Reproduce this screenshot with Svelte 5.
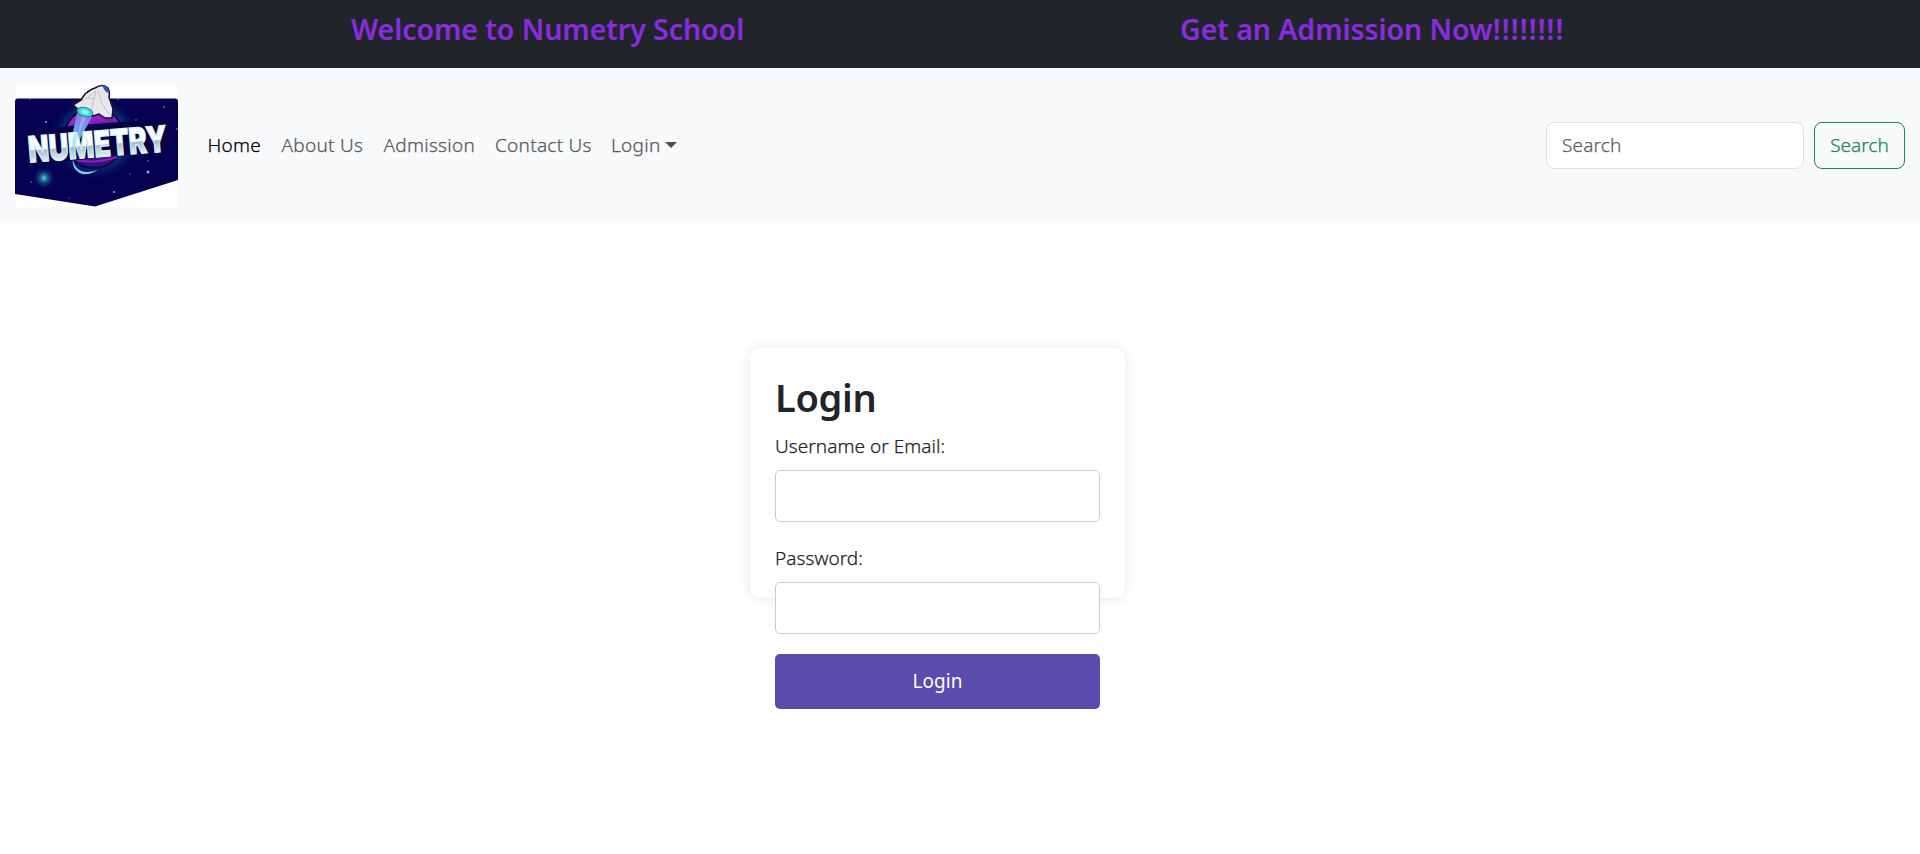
<script>
  const links = [
    { label: 'Home', cls: 'home' },
    { label: 'About Us', cls: 'about' },
    { label: 'Admission', cls: 'admission' },
    { label: 'Contact Us', cls: 'contact' },
    { label: 'Login', cls: 'login' }
  ];
  const stars = [[31, 38, 1], [15, 15, .7], [103, 15, .8], [133, 88, 1.5], [99, 108, 1], [16, 98, .7], [54, 114, .6], [149, 23, .8], [162, 45, .8], [115, 90, .6], [133, 77, .7], [121, 36, .7]];
</script>

<header class="banner">
  <h4>Welcome to Numetry School</h4>
  <h4>Get an Admission Now<span class="marks">!!!!!!!!</span></h4>
</header>

<nav class="navbar">
  <svg class="logo" viewBox="0 0 163 123" width="163" height="123">
    <defs>
      <radialGradient id="sky"><stop offset="0" stop-color="#0875aa" /><stop offset=".65" stop-color="#063c83" /><stop offset="1" stop-color="#050052" stop-opacity="0" /></radialGradient>
      <radialGradient id="glow"><stop offset="0" stop-color="#6cc9dd" /><stop offset=".25" stop-color="#1e7299" /><stop offset="1" stop-color="#050052" stop-opacity="0" /></radialGradient>
      <linearGradient id="planet" x1="0" y1="0" x2=".3" y2="1"><stop offset="0" stop-color="#bd35df" /><stop offset=".4" stop-color="#7f1abc" /><stop offset="1" stop-color="#35107f" /></linearGradient>
      <linearGradient id="steel" gradientUnits="userSpaceOnUse" x1="0" y1="46" x2="0" y2="73"><stop offset="0" stop-color="#fff" /><stop offset=".54" stop-color="#f4f9fc" /><stop offset=".58" stop-color="#a9b9c9" /><stop offset="1" stop-color="#e4f2f6" /></linearGradient>
      <linearGradient id="beam" x1="0" y1="0" x2="0" y2="1"><stop offset="0" stop-color="#8c72e8" /><stop offset="1" stop-color="#50dce9" /></linearGradient>
    </defs>
    <path d="M0 0H163V123H0z" fill="#fdfdfe" />
    <path d="M3 14.500H160Q163 14.500 163 17.500V96L80 122.500L0 110V17.500Q0 14.500 3 14.500z" fill="#050052" />
    <ellipse cx="80" cy="54" rx="47" ry="43" fill="url(#sky)" />
    <circle cx="29" cy="94" r="12" fill="url(#glow)" />
    {#each stars as [x, y, r]}<circle cx={x} cy={y} {r} fill="#83a7d2" />{/each}
    <circle cx="79" cy="54" r="30" fill="url(#planet)" stroke="#09083c" stroke-width="2" />
    <path d="M90 29Q98 31 102 38M62 76Q80 80 102 73" fill="none" stroke="#8a20c0" stroke-width="2" />
    <path d="M10 50L54 42L104 38L155 35L152 68L99 72L62 76L13 83z" fill="#070044" />
    <path d="M62 29L77 33L67 51L59 67L57 52z" fill="url(#beam)" />
    <path d="M67 31L72 32L62 55z" fill="#b8b4fa" opacity=".6" />
    <g transform="rotate(-4.700 82 61)">
      <text x="13" y="73" textLength="139" lengthAdjust="spacingAndGlyphs" class="wordmark">NUMETRY</text>
    </g>
    <path d="M58 51L64 48L60 62L59 78Q56 64 58 51z" fill="#62d9ee" opacity=".45" />
    <path d="M58 76Q62 93 83 86Q68 95 60 85Q57 80 58 76z" fill="#70d5e8" />
    <path d="M58 21L66 16L70 10Q76 5 80 4Q88-1 93 4Q95 8 94 13L98 25L97 34L90 34L84 30L78 32L63 25z" fill="#e7e6e8" stroke="#11142a" stroke-width="1.500" stroke-linejoin="round" />
    <path d="M87 1Q94 1 94 9Q90 9 87 1z" fill="#3157a3" />
    <path d="M67 18L81 7L76 26M83 7L87 20L95 31M71 14L80 15" stroke="#c3c4cb" fill="none" />
    <ellipse cx="70" cy="28" rx="8" ry="4.500" transform="rotate(15 70 28)" fill="#49d7db" stroke="#208a9d" />
    <ellipse cx="70" cy="28" rx="4" ry="2" transform="rotate(15 70 28)" fill="#85f5ed" />
  </svg>
  <div class="links">
    {#each links as link}<a class={link.cls} href="#top">{link.label}</a>{/each}
  </div>
  <form class="search">
    <input placeholder="Search" aria-label="Search" />
    <button type="button">Search</button>
  </form>
</nav>

<main>
  <section class="card">
    <h2>Login</h2>
    <form>
      <label for="user">Username or Email:</label>
      <input id="user" />
      <label for="pass">Password:</label>
      <input id="pass" type="password" />
      <button type="button">Login</button>
    </form>
  </section>
</main>

<style>
  :global(body) { margin: 0; background: #fff; }
  .banner, .navbar, main, input, button { font-family: "Noto Sans", "Open Sans", sans-serif; font-size: 19px; font-weight: 300; color: #212529; }
  .banner, .navbar, main, .card, input, button { box-sizing: border-box; }
  .links a, label, button, .search input { -webkit-text-stroke: .25px currentColor; }
  .banner { height: 68px; background: #212529; display: grid; grid-template-columns: 829px 1fr; padding: 10px 0 0 351px; }
  h4 { margin: 0; font-size: 28.500px; font-weight: 600; line-height: 38px; letter-spacing: -.05px; color: #8a2be2; white-space: nowrap; }
  .marks { letter-spacing: 1.100px; }
  .navbar { height: 155px; background: #f8f9fa; display: flex; align-items: center; padding: 0 15px; }
  .logo { display: block; flex: none; }
  .wordmark { font: 900 36px Inter, sans-serif; fill: url(#steel); stroke: #d9f5fa; stroke-width: 1.2; }
  .links { display: flex; margin: -1px 0 0 19.500px; }
  .links a { padding: 0 10px; line-height: 30px; letter-spacing: .27px; color: #585a5b; text-decoration: none; white-space: nowrap; flex: none; box-sizing: border-box; }
  .links .home { width: 74px; color: #000; }
  .links .about { width: 102px; }
  .links .admission { width: 111.500px; }
  .links .contact { width: 116px; }
  .links .login { display: flex; align-items: center; }
  .login::after { content: ""; margin: 0 0 0 5px; border: 6px solid transparent; border-top-color: #4e5051; border-bottom: 0; }
  .search { margin-left: auto; display: flex; gap: 10px; }
  .search input { width: 258px; height: 47px; padding: 0 15px 1px; letter-spacing: .15px; border: 1px solid #dee2e6; border-radius: 8px; background: #fff; }
  .search input::placeholder { color: #5b6065; opacity: 1; }
  .search button { width: 91px; height: 47px; padding: 0 0 1px; border: 1px solid #198754; border-radius: 8px; background: transparent; color: #198754; }
  main { min-height: 631px; display: flex; justify-content: center; padding: 125px 45px 0 0; }
  .card { width: 375px; height: 250px; padding: 25px; border-radius: 10px; box-shadow: 0 0 12px rgba(0,0,0,.1); background: #fff; }
  h2 { margin: 0 0 10px; font-size: 38px; line-height: 48px; font-weight: 600; letter-spacing: -.3px; }
  .card form { display: flex; flex-direction: column; }
  label { display: block; height: 30px; line-height: 30px; margin-bottom: 9px; letter-spacing: .05px; }
  .card input { width: 325px; height: 52px; padding: 10px; margin: 0 0 21px; border: 1px solid #ccc; border-radius: 5px; background: #fff; }
  .card #pass { margin-bottom: 20px; }
  .card button { height: 55px; padding: 0 0 1px; border: 0; border-radius: 5px; background: #5a4bad; color: #fff; font-weight: 400; letter-spacing: 0; -webkit-text-stroke: 0; }
</style>
